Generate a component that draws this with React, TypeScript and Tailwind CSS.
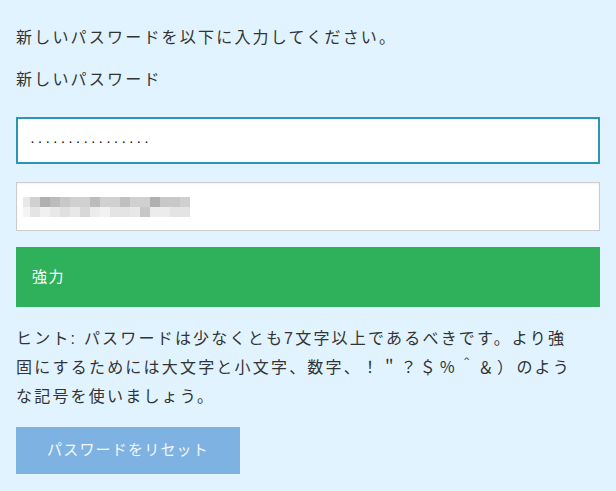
import { useState } from "react";

const FONT = "font-['Liberation_Sans','Noto_Sans_CJK_JP',sans-serif]";

// blurred placeholder text in the confirm field, drawn as a mosaic
const MOSAIC_TOP = ["#e8e8e8", "#d0d0d0", "#b0b0b0", "#bcbcbc", "#c8c8c8", "#d0d0d0", "#d0d0d0", "#bcbcbc", "#d0d0d0", "#d0d0d0", "#c0c0c0", "#d0d0d0", "#d0d0d0", "#b0b0b0", "#c8c8c8", "#c8c8c8", "#d0d0d0"];
const MOSAIC_BOTTOM = ["#f4f4f4", "#e4e4e4", "#f0f0f0", "#e8e8e8", "#e0e0e0", "#e8e8e8", "#d8d8d8", "#ececec", "#f2f2f2", "#e4e4e4", "#e4e4e4", "#e8e8e8", "#c8c8c8", "#ececec", "#ececec", "#e4e4e4", "#e4e4e4"];

function Mosaic() {
  return (
    <div className="flex flex-col">
      {[MOSAIC_TOP, MOSAIC_BOTTOM].map((row, r) => (
        <div key={r} className="flex">
          {row.map((c, i) => (
            <div
              key={i}
              className={i === 0 ? "h-[10px] w-[7px]" : "h-[10px] w-[10px]"}
              style={{ backgroundColor: c }}
            />
          ))}
        </div>
      ))}
    </div>
  );
}

export default function App() {
  const [pw, setPw] = useState("················");

  return (
    <div className={`min-h-[491px] bg-[#e1f3fe] px-4 pt-[23px] pb-4 text-[#333] ${FONT}`}>
      <p className="text-[16px] leading-[29px] tracking-[2.2px]">新しいパスワードを以下に入力してください。</p>
      <p className="mt-[13px] text-[16px] leading-[29px] tracking-[2.2px]">新しいパスワード</p>

      <input
        type="text"
        value={pw}
        onChange={e => setPw(e.target.value)}
        className="mt-[23px] block h-[47px] w-full border-2 border-[#2a96b6] bg-white pl-3 text-[15px] tracking-[2.6px] text-[#111] outline-none"
      />

      <div className="mt-[18px] flex h-[49px] items-center border border-[#cccccc] bg-white pl-[6px] shadow-[inset_0_1px_2px_rgba(0,0,0,0.06)]">
        <Mosaic />
      </div>

      <div className="mt-4 flex h-[60px] items-center bg-[#2fb05a] px-4 text-[15px] tracking-[1.5px] text-white">
        強力
      </div>

      <p className="mt-[17px] text-[16px] leading-[29px] tracking-[2.2px]">
        ヒント: パスワードは少なくとも7文字以上であるべきです。より強
        <br />
        固にするためには大文字と小文字、数字、<span className="tracking-[3.3px]">！＂？＄％＾＆）</span>のよう
        <br />
        な記号を使いましょう。
      </p>

      <button
        type="button"
        className="mt-4 h-[47px] w-[224px] bg-[#7db2e2] text-[15px] tracking-[1.2px] text-white/90"
      >
        パスワードをリセット
      </button>
    </div>
  );
}
